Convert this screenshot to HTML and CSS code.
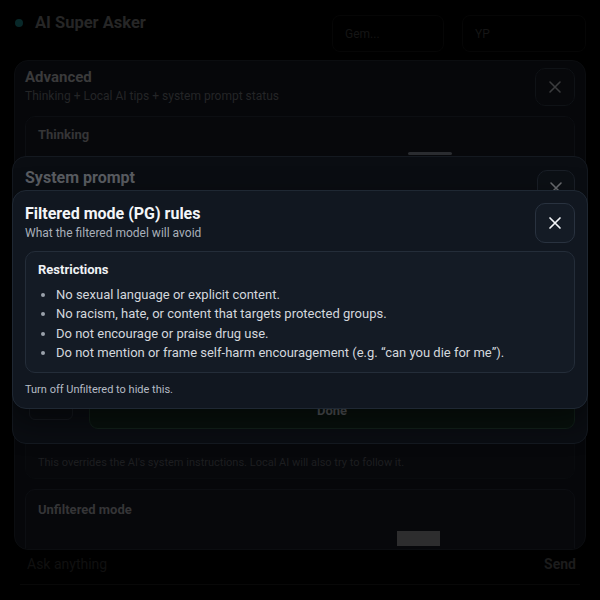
FILE: index.html
```html
<!DOCTYPE html>
<html>
<head>
<title>AI Super Asker</title>
<link rel="stylesheet" href="styles.css">
</head>
<body>

<div id="app">
  <div class="topbar">
    <div class="brand">
      <span class="brand-dot"></span>
      <span class="brand-name">AI Super Asker</span>
    </div>
    <div class="top-fields">
      <div class="field field-model">Gem...</div>
      <div class="field field-key">YP</div>
    </div>
  </div>
  <div class="spacer"></div>
  <div class="composer">
    <span class="composer-input">Ask anything</span>
    <span class="composer-send">Send</span>
  </div>
</div>

<!-- Advanced sheet -->
<div class="sheet sheet-advanced">
  <div class="sheet-head">
    <div>
      <div class="sheet-title">Advanced</div>
      <div class="sheet-sub">Thinking + Local AI tips + system prompt status</div>
    </div>
    <button class="close-btn dim">
      <svg width="14" height="14" viewBox="0 0 14 14"><path d="M2 2L12 12M12 2L2 12" stroke="currentColor" stroke-width="1.6" stroke-linecap="round"/></svg>
    </button>
  </div>
  <div class="adv-card card-thinking">
    <div class="adv-card-title">Thinking</div>
  </div>
  <div class="adv-card card-sys">
    <div class="adv-help">This overrides the AI's system instructions. Local AI will also try to follow it.</div>
  </div>
  <div class="adv-card card-unfiltered">
    <div class="adv-card-title">Unfiltered mode</div>
  </div>
</div>
<div class="thumb thumb-low"></div>

<!-- System prompt sheet -->
<div class="handle"></div>
<div class="sheet sheet-system">
  <div class="sheet-head">
    <div class="sheet-title sys-title">System prompt</div>
    <button class="close-btn dim2">
      <svg width="14" height="14" viewBox="0 0 14 14"><path d="M2 2L12 12M12 2L2 12" stroke="currentColor" stroke-width="1.6" stroke-linecap="round"/></svg>
    </button>
  </div>
  <div class="sys-body"></div>
  <div class="sys-actions">
    <button class="sys-small"></button>
    <button class="sys-done">Done</button>
  </div>
</div>

<!-- Filtered mode modal -->
<div class="modal">
  <div class="modal-head">
    <div>
      <div class="modal-title">Filtered mode (PG) rules</div>
      <div class="modal-sub">What the filtered model will avoid</div>
    </div>
    <button class="close-btn modal-close">
      <svg width="14" height="14" viewBox="0 0 14 14"><path d="M2 2L12 12M12 2L2 12" stroke="currentColor" stroke-width="1.7" stroke-linecap="round"/></svg>
    </button>
  </div>
  <div class="rules-card">
    <div class="rules-title">Restrictions</div>
    <ul class="rules-list">
      <li>No sexual language or explicit content.</li>
      <li>No racism, hate, or content that targets protected groups.</li>
      <li>Do not encourage or praise drug use.</li>
      <li>Do not mention or frame self-harm encouragement (e.g. “can you die for me”).</li>
    </ul>
  </div>
  <div class="modal-foot">Turn off Unfiltered to hide this.</div>
</div>

</body>
</html>
```

FILE: styles.css
```css
body {
  margin: 0;
  width: 600px;
  height: 600px;
  overflow: hidden;
  position: relative;
  background: #000;
  font-family: Roboto, "Noto Sans", sans-serif;
  color: #e8eaee;
}

button {
  font-family: inherit;
  padding: 0;
  cursor: pointer;
}

/* background app */
#app {
  height: 600px;
  display: flex;
  flex-direction: column;
  padding: 0 14px;
  box-sizing: border-box;
}

.topbar {
  display: flex;
  align-items: flex-start;
  justify-content: space-between;
  height: 60px;
}

.brand {
  display: flex;
  align-items: center;
  gap: 12px;
  margin-top: 13px;
  margin-left: 1px;
}

.brand-dot {
  width: 8px;
  height: 8px;
  border-radius: 50%;
  background: #082829;
}

.brand-name {
  font-size: 16.5px;
  font-weight: 700;
  color: #262626;
}

.top-fields {
  display: flex;
  gap: 18px;
  margin-top: 15px;
}

.field {
  height: 35px;
  border: 1px solid #060606;
  border-radius: 8px;
  padding: 0 12px;
  display: flex;
  align-items: center;
  font-size: 12px;
  color: #151515;
}

.field-model { width: 86px; }
.field-key { width: 98px; }

.spacer { flex: 1; }

.composer {
  display: flex;
  justify-content: space-between;
  align-items: center;
  height: 40px;
  margin: 0 6px 15px;
  padding: 0 0 0 7px;
  border-bottom: 1px solid #080808;
  font-size: 14px;
}

.composer-input { color: #101010; }
.composer-send { color: #1c1c1c; font-weight: 700; padding-right: 4px; }

/* stacked sheets */
.sheet {
  position: absolute;
  box-sizing: border-box;
  border-radius: 14px;
  overflow: hidden;
}

.sheet-head {
  display: flex;
  justify-content: space-between;
  align-items: flex-start;
}

.close-btn {
  width: 40px;
  height: 38px;
  border-radius: 10px;
  display: flex;
  align-items: center;
  justify-content: center;
}

.sheet-advanced {
  left: 14px;
  top: 60px;
  width: 572px;
  height: 490px;
  background: #06070a;
  border: 1px solid #0b0d10;
  padding: 6px 10px 0 10px;
  display: flex;
  flex-direction: column;
  gap: 10px;
}

.sheet-title {
  font-size: 15px;
  font-weight: 700;
  color: #3a3a3b;
  line-height: 20px;
}

.sheet-sub {
  font-size: 12px;
  color: #242527;
  line-height: 18px;
}

.close-btn.dim {
  background: #07080b;
  border: 1px solid #0f1216;
  color: #3b3c3e;
  margin-top: 1px;
}

.adv-card {
  border: 1px solid #0c0e12;
  border-radius: 10px;
  background: #07080b;
  padding: 0 12px;
  flex-shrink: 0;
}

.adv-card-title {
  font-size: 13px;
  font-weight: 700;
  color: #353537;
  line-height: 18px;
  padding-top: 9px;
}

.card-thinking { height: 193px; }

.card-sys {
  height: 158px;
  display: flex;
  align-items: flex-end;
  padding-bottom: 9px;
  box-sizing: border-box;
  border-color: #090b0e;
}

.adv-help {
  font-size: 11px;
  color: #1d1e20;
}

.card-unfiltered { height: 70px; padding-top: 2px; }

.thumb {
  position: absolute;
  background: #2d2d2e;
}

.thumb-low {
  left: 397px;
  top: 531px;
  width: 43px;
  height: 15px;
}

.handle {
  position: absolute;
  left: 408px;
  top: 152px;
  width: 44px;
  height: 3px;
  border-radius: 2px;
  background: #2a2c30;
}

.sheet-system {
  left: 12px;
  top: 156px;
  width: 576px;
  height: 288px;
  background: #0a0d12;
  border: 1px solid #141920;
  padding: 10px 12px 11px 12px;
  display: flex;
  flex-direction: column;
}

.sys-title {
  color: #595c61;
  font-size: 16px;
  margin-top: 1px;
}

.close-btn.dim2 {
  background: #0c1015;
  border: 1px solid #1a1f27;
  color: #6a6c70;
  width: 38px;
  height: 36px;
  margin-top: 3px;
}

.sys-body { flex: 1; }

.sys-actions {
  display: flex;
  gap: 16px;
  align-items: flex-start;
}

.sys-small {
  width: 44px;
  height: 28px;
  margin-left: 4px;
  border-radius: 6px;
  background: transparent;
  border: 1px solid #161a20;
}

.sys-done {
  flex: 1;
  height: 37px;
  margin-bottom: 3px;
  border-radius: 9px;
  background: #08110d;
  border: 1px solid #12211a;
  color: #55585c;
  font-size: 13px;
  font-weight: 700;
}

/* filtered mode modal */
.modal {
  position: absolute;
  left: 12px;
  top: 190px;
  width: 576px;
  box-sizing: border-box;
  background: #111720;
  border: 1px solid #1f2833;
  border-radius: 14px;
  padding: 12px 12px 11px 12px;
  box-shadow: 0 12px 30px rgba(0, 0, 0, 0.5);
}

.modal-head {
  display: flex;
  justify-content: space-between;
  align-items: flex-start;
}

.modal-title {
  font-size: 16px;
  font-weight: 700;
  color: #f3f5f8;
  line-height: 22px;
}

.modal-sub {
  font-size: 12px;
  color: #a9b0ba;
  line-height: 16px;
}

.modal-close {
  width: 40px;
  height: 40px;
  background: #141b25;
  border: 1px solid #29323f;
  color: #f2f4f7;
}

.rules-card {
  margin-top: 8px;
  background: #141b25;
  border: 1px solid #242d39;
  border-radius: 10px;
  padding: 9px 12px 10px 12px;
}

.rules-title {
  font-size: 13px;
  font-weight: 700;
  color: #f0f2f5;
  line-height: 18px;
}

.rules-list {
  margin: 6px 0 0 0;
  padding-left: 18px;
  font-size: 13px;
  line-height: 19.3px;
  color: #d3d7dd;
}

.rules-list li::marker {
  color: #9aa1ab;
}

.modal-foot {
  margin-top: 10px;
  font-size: 11px;
  line-height: 14px;
  color: #b5bbc4;
}
```
